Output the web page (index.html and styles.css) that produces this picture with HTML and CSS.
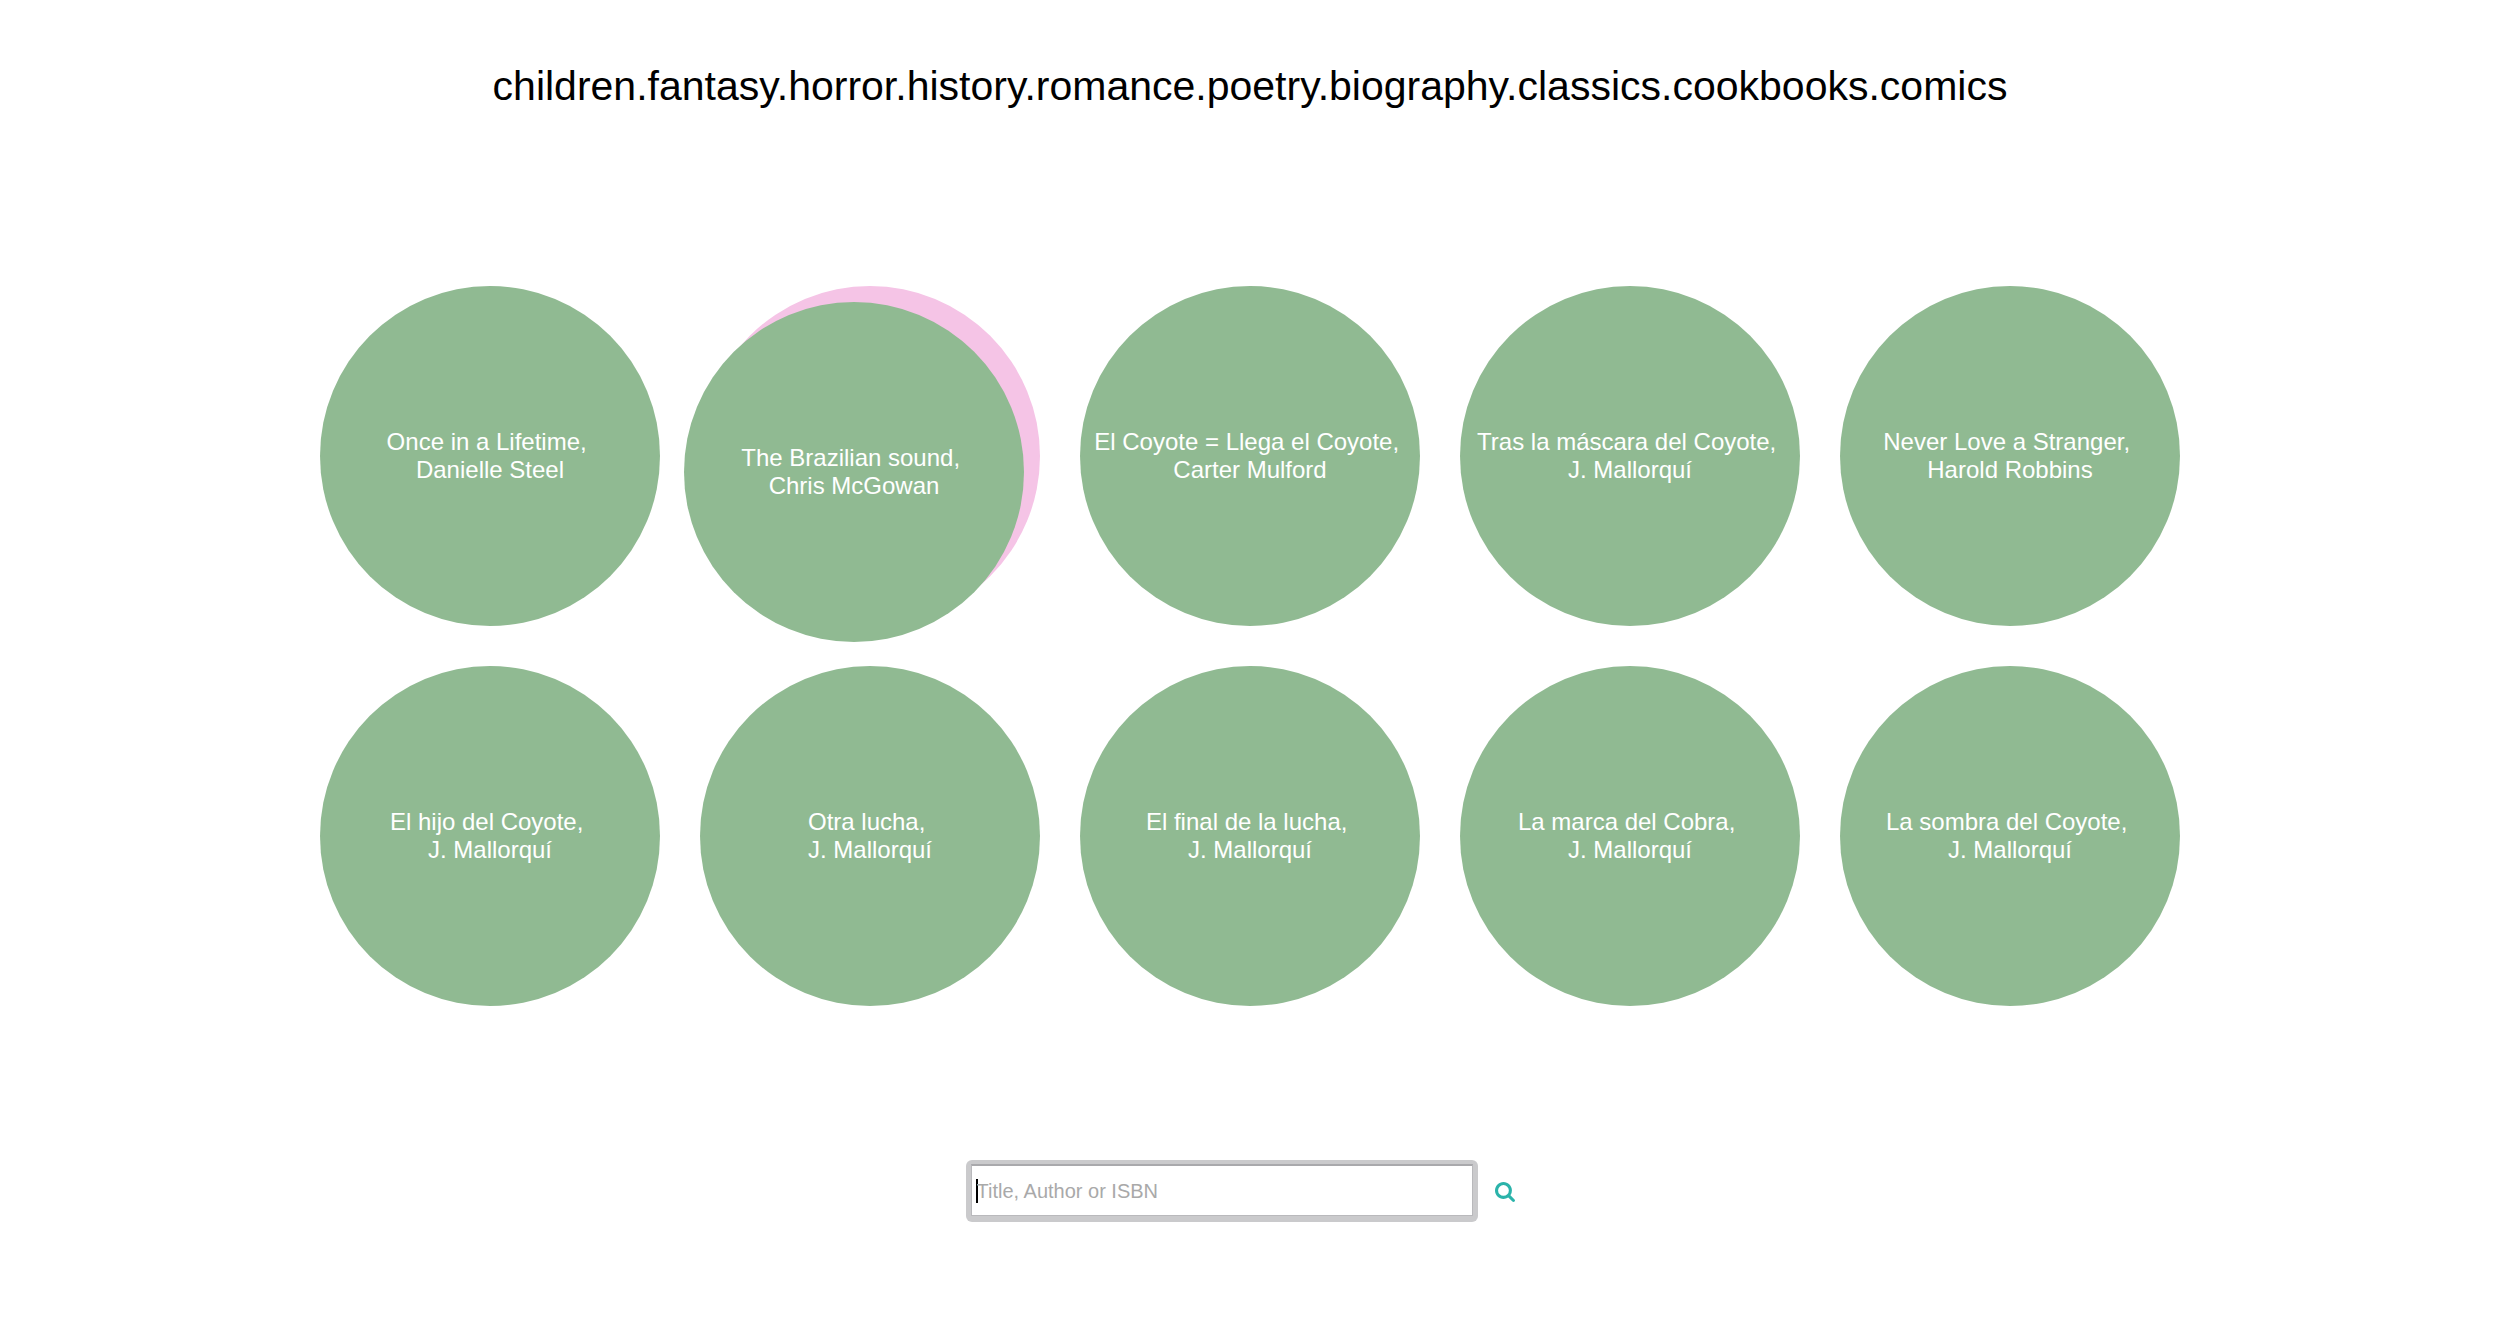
FILE: index.html
```html
<!DOCTYPE html>
<html lang="en">
<head>
<meta charset="utf-8">
<meta name="viewport" content="width=device-width, initial-scale=1">
<title>Books</title>
<link rel="stylesheet" href="styles.css">
</head>
<body>
<nav class="genres" aria-label="Genres"><a href="#children">children</a>.<a href="#fantasy">fantasy</a>.<a href="#horror">horror</a>.<a href="#history">history</a>.<a href="#romance">romance</a>.<a href="#poetry">poetry</a>.<a href="#biography">biography</a>.<a href="#classics">classics</a>.<a href="#cookbooks">cookbooks</a>.<a href="#comics">comics</a></nav>
<main>
<ul class="books">
<li class="book"><a class="cover" href="#b1">Once in a Lifetime,&nbsp;<br>Danielle Steel</a></li>
<li class="book"><a class="cover active" href="#b2">The Brazilian sound,&nbsp;<br>Chris McGowan</a></li>
<li class="book"><a class="cover" href="#b3">El Coyote = Llega el Coyote,&nbsp;<br>Carter Mulford</a></li>
<li class="book"><a class="cover" href="#b4">Tras la máscara del Coyote,&nbsp;<br>J. Mallorquí</a></li>
<li class="book"><a class="cover" href="#b5">Never Love a Stranger,&nbsp;<br>Harold Robbins</a></li>
<li class="book"><a class="cover" href="#b6">El hijo del Coyote,&nbsp;<br>J. Mallorquí</a></li>
<li class="book"><a class="cover" href="#b7">Otra lucha,&nbsp;<br>J. Mallorquí</a></li>
<li class="book"><a class="cover" href="#b8">El final de la lucha,&nbsp;<br>J. Mallorquí</a></li>
<li class="book"><a class="cover" href="#b9">La marca del Cobra,&nbsp;<br>J. Mallorquí</a></li>
<li class="book"><a class="cover" href="#b10">La sombra del Coyote,&nbsp;<br>J. Mallorquí</a></li>
</ul>
<form class="search" role="search">
<div class="search-field">
<input class="search-input" type="text" name="q" placeholder="Title, Author or ISBN" aria-label="Title, Author or ISBN">
</div>
<button class="search-button" type="submit" aria-label="Search">
<svg class="search-icon" viewBox="64 128 1664 1664" aria-hidden="true"><path d="M1216 832q0-185-131.500-316.500t-316.500-131.500-316.500 131.500-131.500 316.500 131.500 316.500 316.500 131.500 316.500-131.500 131.500-316.500zm512 832q0 52-38 90t-90 38q-54 0-90-38l-343-342q-179 124-399 124-143 0-273.500-55.500t-225-150-150-225-55.500-273.500 55.500-273.500 150-225 225-150 273.500-55.500 273.500 55.500 225 150 150 225 55.500 273.500q0 220-124 399l343 343q37 37 37 90z"/></svg>
</button>
</form>
</main>
</body>
</html>
```
FILE: styles.css
```css
* {
  box-sizing: border-box;
}

body {
  margin: 0;
  padding: 64px 8px 64px 0;
  background: #fff;
  color: #000;
  font-family: "Liberation Sans", Arial, Helvetica, sans-serif;
}

a {
  color: inherit;
  text-decoration: none;
}

.genres {
  font-size: 41px;
  line-height: 44px;
  text-align: center;
}

.books {
  display: flex;
  flex-wrap: wrap;
  justify-content: center;
  gap: 40px;
  max-width: 1860px;
  margin: 178px auto 0;
  padding: 0;
  list-style: none;
}

.book {
  width: 340px;
  height: 340px;
  border-radius: 50%;
}

.cover {
  display: flex;
  align-items: center;
  justify-content: center;
  height: 100%;
  border-radius: 50%;
  background: #90ba92;
  color: #fff;
  font-size: 24px;
  line-height: 28px;
  text-align: center;
}

.book:has(.active),
.book:hover {
  background: #f5c4e6;
}

.cover.active,
.cover:hover {
  transform: translate(-16px, 16px);
}

.search {
  display: flex;
  align-items: center;
  justify-content: center;
  gap: 17px;
  margin-top: 154px;
  padding-right: 20px;
}

/* focus ring around the text box */
.search-field {
  display: flex;
  padding: 4px 5px 6px;
  border-radius: 6px;
  background: #cacacc;
}

.search-input {
  width: 502px;
  height: 52px;
  padding: 2px 5px 0;
  border: 1px solid #b9b9bc;
  border-top: 2px solid #a9a9ac;
  border-radius: 0;
  outline: none;
  /* text caret at the start of the field */
  background: linear-gradient(#000, #000) 4px center / 2px 24px no-repeat #fff;
  font: 20px "Liberation Sans", Arial, Helvetica, sans-serif;
}

.search-input::placeholder {
  color: #a9a9a9;
  opacity: 1;
}

.search-button {
  display: flex;
  padding: 2px 0 0;
  border: 0;
  background: none;
  cursor: pointer;
}

.search-icon {
  width: 20px;
  height: 20px;
  fill: #2bb3aa;
}
```
